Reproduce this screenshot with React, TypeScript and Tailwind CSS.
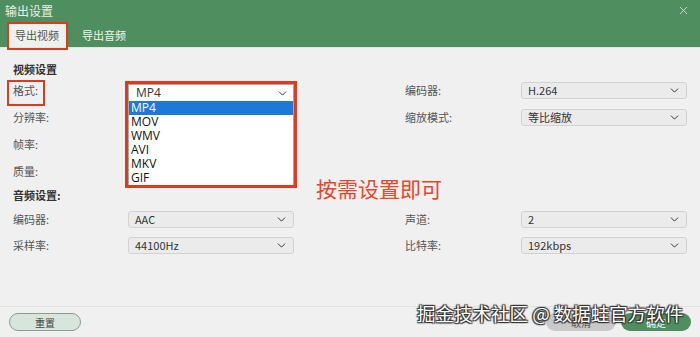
import { ChevronDown, X } from 'lucide-react'

const CJK = "font-['Noto_Sans_CJK_SC','Noto_Sans',sans-serif]"

function Select({ value }: { value: string }) {
  return (
    <div className="w-[166px] h-[17px] bg-[#ebebeb] border border-[#d2d2d2] rounded-[3px] flex items-center justify-between pl-[6px] pr-[5px] text-[11px] text-[#333]">
      <span className="leading-none">{value}</span>
      <ChevronDown className="w-[13px] h-[13px] text-[#333]" strokeWidth={1.8} />
    </div>
  )
}

function Row({
  label,
  value,
  rLabel,
  rValue,
  h,
}: {
  label: string
  value?: string
  rLabel?: string
  rValue?: string
  h: string
}) {
  return (
    <div className={`flex items-center ${h}`}>
      <div className="w-[115px] text-[11px] text-[#555]">{label}</div>
      <div className="w-[166px]">{value && <Select value={value} />}</div>
      <div className="w-[111px]" />
      <div className="w-[116px] text-[11px] text-[#555]">{rLabel}</div>
      <div className="w-[166px]">{rValue && <Select value={rValue} />}</div>
    </div>
  )
}

export default function App() {
  const formats = ['MP4', 'MOV', 'WMV', 'AVI', 'MKV', 'GIF']
  return (
    <div className={`relative w-[700px] h-[337px] bg-[#f0f0f0] overflow-hidden ${CJK}`}>
      {/* Header */}
      <div className="bg-[#4f8f5f] h-[48px] flex flex-col border-b border-[#dfe8dc]">
        <div className="flex items-center justify-between h-[22px] pl-[5px] pr-[10px]">
          <span className="text-[12px] text-[#e8f0e8]">输出设置</span>
          <X className="w-[13px] h-[13px] text-[#e8f0e8]" strokeWidth={1.4} />
        </div>
        <div className="flex items-end h-[26px] pl-[8px]">
          <div className="w-[58px] h-[25px] bg-[#eef1ec] flex items-center justify-center pt-[2px] text-[11px] text-[#555]">
            导出视频
          </div>
          <div className="ml-[16px] h-[25px] flex items-center pt-[2px] text-[11px] text-[#f0f5f0]">导出音频</div>
        </div>
      </div>

      {/* Body */}
      <div className="pl-[13px] pt-[13px]">
        <div className="h-[16px] flex items-center text-[11px] font-bold text-[#333]">视频设置</div>
        <Row h="h-[27px]" label="格式:" rLabel="编码器:" rValue="H.264" />
        <Row h="h-[27px]" label="分辨率:" rLabel="缩放模式:" rValue="等比缩放" />
        <Row h="h-[27px]" label="帧率:" />
        <Row h="h-[27px]" label="质量:" />
        <div className="h-[21px] flex items-center text-[11px] font-bold text-[#333]">音频设置:</div>
        <Row h="h-[26px]" label="编码器:" value="AAC" rLabel="声道:" rValue="2" />
        <Row h="h-[26px]" label="采样率:" value="44100Hz" rLabel="比特率:" rValue="192kbps" />
      </div>

      {/* Footer */}
      <div className="absolute left-0 right-0 top-[306px] border-t border-[#e2e2e2] h-[31px] flex items-center px-[9px] justify-between">
        <div className="w-[72px] h-[18px] rounded-full border border-[#8c9c90] bg-[#d6e6da] flex items-center justify-center text-[10px] text-[#444]">
          重置
        </div>
        <div className="flex gap-[5px]">
          <div className="w-[70px] h-[18px] rounded-full bg-[#c9c9c9] flex items-center justify-center text-[10px] text-[#555]">
            取消
          </div>
          <div className="w-[70px] h-[18px] rounded-full bg-[#4f8f5f] flex items-center justify-center text-[10px] text-white">
            确定
          </div>
        </div>
      </div>

      {/* Open dropdown */}
      <div className="absolute left-[128px] top-[84px] w-[166px] bg-white border border-[#a8a8a8] text-[12px] text-[#111] font-['Open_Sans','Noto_Sans',sans-serif]">
        <div className="h-[16px] flex items-center justify-between pl-[7px] pr-[4px] text-[#333]">
          <span>MP4</span>
          <ChevronDown className="w-[13px] h-[13px] text-[#333]" strokeWidth={1.8} />
        </div>
        {formats.map((f, i) => (
          <div
            key={f}
            className={`h-[14px] flex items-center pl-[2px] leading-none ${i === 0 ? 'bg-[#1e78d7] text-white' : ''}`}
          >
            {f}
          </div>
        ))}
      </div>

      {/* Annotations */}
      <div className="absolute left-[7px] top-[22px] w-[61px] h-[28px] border-[2px] border-[#e0391d]" />
      <div className="absolute left-[7px] top-[80px] w-[38px] h-[26px] border-[2px] border-[#e0391d]" />
      <div className="absolute left-[125px] top-[81px] w-[172px] h-[107px] border-[3px] border-[#e0391d]" />
      <div className="absolute left-[316px] top-[174px] text-[21px] leading-[28px] text-[#e8452c]">按需设置即可</div>

      {/* Watermark */}
      <div className="absolute left-[417px] top-[299px] whitespace-nowrap text-[18.5px] leading-[28px] text-white [text-shadow:0_0_1px_#222,1px_1px_1px_#333,-1px_-1px_1px_#333,1px_-1px_1px_#333,-1px_1px_1px_#333]">
        掘金技术社区 @ 数据蛙官方软件
      </div>
    </div>
  )
}
